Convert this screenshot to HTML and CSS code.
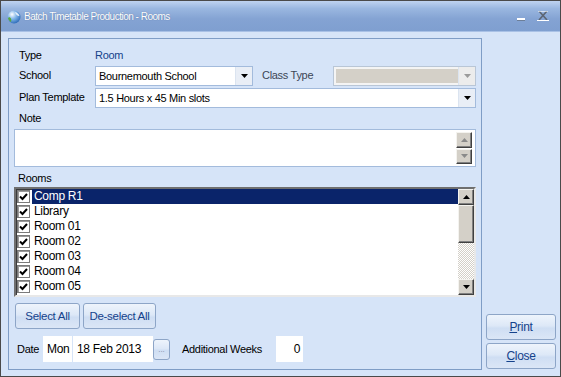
FILE: index.html
```html
<!DOCTYPE html>
<html>
<head>
    <title>Batch Timetable Production - Rooms</title>
    <link rel="stylesheet" href="styles.css">
</head>
<body>
    <div class="window">
        <div class="titlebar">
            <svg class="app-icon" width="14" height="14" viewBox="0 0 14 14">
                <defs>
                    <radialGradient id="globe" cx="0.35" cy="0.3" r="0.8">
                        <stop offset="0" stop-color="#ffffff"/>
                        <stop offset="0.45" stop-color="#7fb4e8"/>
                        <stop offset="1" stop-color="#1f5fb0"/>
                    </radialGradient>
                </defs>
                <circle cx="7" cy="7" r="6.5" fill="url(#globe)"/>
                <path d="M1 8 C3 6 5 9 4 12 C2.5 11 1.3 9.8 1 8 Z" fill="#5aa83c"/>
                <path d="M8 2 C10 2.5 12 4 12.5 6 C11 6.5 9 5 8 2 Z" fill="#ffffff" opacity="0.8"/>
            </svg>
            <span class="title">Batch Timetable Production - Rooms</span>
            <svg class="tb-min" width="8" height="4" viewBox="0 0 8 4">
                <rect x="0" y="0" width="8" height="2" fill="#ffffff"/>
                <rect x="0" y="2" width="8" height="1" fill="#6d7f99"/>
            </svg>
            <svg class="tb-close" width="12" height="10" viewBox="0 0 12 10">
                <path d="M2 0 L10 9 M10 0 L2 9" stroke="#5d6673" stroke-width="1.6"/>
                <rect x="0" y="9" width="12" height="1" fill="#ffffff"/>
                <rect x="1" y="0" width="10" height="1" fill="#ffffff" opacity="0.6"/>
            </svg>
        </div>

        <div class="client">
            <div class="panel">
                <div class="row row-type">
                    <span class="lbl">Type</span>
                    <span class="value">Room</span>
                </div>

                <div class="row row-ctl">
                    <span class="lbl">School</span>
                    <div class="combo combo-school">
                        <span class="combo-text">Bournemouth School</span>
                        <span class="combo-btn"><svg width="7" height="4" viewBox="0 0 7 4"><polygon points="0,0 7,0 3.5,4" fill="#000"/></svg></span>
                    </div>
                    <span class="lbl-class">Class Type</span>
                    <div class="combo combo-dis">
                        <span class="combo-fill"></span>
                        <span class="combo-btn"><svg width="7" height="4" viewBox="0 0 7 4"><polygon points="0,0 7,0 3.5,4" fill="#9a9a9a"/></svg></span>
                    </div>
                </div>

                <div class="row row-ctl">
                    <span class="lbl">Plan Template</span>
                    <div class="combo combo-wide">
                        <span class="combo-text">1.5 Hours x 45 Min slots</span>
                        <span class="combo-btn"><svg width="7" height="4" viewBox="0 0 7 4"><polygon points="0,0 7,0 3.5,4" fill="#000"/></svg></span>
                    </div>
                </div>

                <div class="row row-note">
                    <span class="lbl">Note</span>
                </div>

                <div class="note">
                    <div class="spin">
                        <span class="btn3d spin-btn"><svg width="7" height="4" viewBox="0 0 7 4"><polygon points="0,4 7,4 3.5,0" fill="#8a8a8a"/></svg></span>
                        <span class="btn3d spin-btn"><svg width="7" height="4" viewBox="0 0 7 4"><polygon points="0,0 7,0 3.5,4" fill="#8a8a8a"/></svg></span>
                    </div>
                </div>

                <div class="rooms-lbl">Rooms</div>

                <div class="listbox">
                    <ul class="items">
                        <li class="item selected"><span class="check"><svg width="9" height="9" viewBox="0 0 9 9"><path d="M1 4.5 L3.5 7 L8 2" fill="none" stroke="#000" stroke-width="2"/></svg></span><span class="item-text">Comp R1</span></li>
                        <li class="item"><span class="check"><svg width="9" height="9" viewBox="0 0 9 9"><path d="M1 4.5 L3.5 7 L8 2" fill="none" stroke="#000" stroke-width="2"/></svg></span><span class="item-text">Library</span></li>
                        <li class="item"><span class="check"><svg width="9" height="9" viewBox="0 0 9 9"><path d="M1 4.5 L3.5 7 L8 2" fill="none" stroke="#000" stroke-width="2"/></svg></span><span class="item-text">Room 01</span></li>
                        <li class="item"><span class="check"><svg width="9" height="9" viewBox="0 0 9 9"><path d="M1 4.5 L3.5 7 L8 2" fill="none" stroke="#000" stroke-width="2"/></svg></span><span class="item-text">Room 02</span></li>
                        <li class="item"><span class="check"><svg width="9" height="9" viewBox="0 0 9 9"><path d="M1 4.5 L3.5 7 L8 2" fill="none" stroke="#000" stroke-width="2"/></svg></span><span class="item-text">Room 03</span></li>
                        <li class="item"><span class="check"><svg width="9" height="9" viewBox="0 0 9 9"><path d="M1 4.5 L3.5 7 L8 2" fill="none" stroke="#000" stroke-width="2"/></svg></span><span class="item-text">Room 04</span></li>
                        <li class="item"><span class="check"><svg width="9" height="9" viewBox="0 0 9 9"><path d="M1 4.5 L3.5 7 L8 2" fill="none" stroke="#000" stroke-width="2"/></svg></span><span class="item-text">Room 05</span></li>
                    </ul>
                    <div class="vscroll">
                        <span class="btn3d sb-btn"><svg width="7" height="4" viewBox="0 0 7 4"><polygon points="0,4 7,4 3.5,0" fill="#000"/></svg></span>
                        <span class="btn3d sb-thumb"></span>
                        <span class="sb-track"></span>
                        <span class="btn3d sb-btn"><svg width="7" height="4" viewBox="0 0 7 4"><polygon points="0,0 7,0 3.5,4" fill="#000"/></svg></span>
                    </div>
                </div>

                <div class="btn-row">
                    <button class="btn btn-sel">Select All</button>
                    <button class="btn btn-desel">De-select All</button>
                </div>

                <div class="date-row">
                    <span class="lbl-date">Date</span>
                    <span class="box box-day">Mon</span>
                    <span class="box box-date">18 Feb 2013</span>
                    <button class="btn btn-dots">...</button>
                    <span class="lbl-weeks">Additional Weeks</span>
                    <span class="box box-weeks">0</span>
                </div>
            </div>

            <div class="side">
                <button class="btn btn-side"><u>P</u>rint</button>
                <button class="btn btn-side"><u>C</u>lose</button>
            </div>
        </div>
    </div>
</body>
</html>
```

FILE: styles.css
```css
* {
    box-sizing: border-box;
}

body {
    margin: 0;
    font-family: "Liberation Sans", Arial, sans-serif;
    font-size: 11px;
    letter-spacing: -0.3px;
    color: #000;
}

.window {
    width: 561px;
    height: 377px;
    border: 1px solid #4a4a4a;
    background-color: #d6e4f8;
    display: flex;
    flex-direction: column;
}

/* title bar */
.titlebar {
    height: 31px;
    flex: none;
    display: flex;
    align-items: center;
    padding-left: 6px;
    background: linear-gradient(to bottom, #bfd3f0 0%, #9ab7e0 25%, #84a3d3 60%, #7f9fd0 100%);
    border-bottom: 1px solid #a9c1e6;
}

.app-icon {
    margin-top: 1px;
}

.title {
    margin-left: 3px;
    color: #ffffff;
    font-size: 10px;
    letter-spacing: -0.5px;
    text-shadow: 0 0 1px #4f6d9c;
    flex: 1;
}

.tb-min {
    margin-top: 8px;
    margin-right: 12px;
}

.tb-close {
    margin-top: 0;
    margin-right: 11px;
}

/* client area */
.client {
    flex: 1;
    display: flex;
    padding: 6px 4px 6px 7px;
}

.panel {
    width: 474px;
    border: 1px solid #7f9dc6;
    padding: 5px 5px 6px 5px;
    display: flex;
    flex-direction: column;
}

.row {
    display: flex;
    align-items: center;
    height: 20px;
}

.row-ctl {
    margin-top: 2px;
}

.lbl {
    width: 81px;
    padding-left: 5px;
    flex: none;
    padding-bottom: 3px;
}

.row-type .lbl {
    padding-bottom: 0;
    padding-top: 2px;
}

.value {
    color: #15428b;
    padding-top: 2px;
}

.lbl-class {
    width: 80px;
    padding-left: 9px;
    color: #3c4656;
    padding-bottom: 3px;
}

.combo {
    height: 20px;
    display: flex;
    border: 1px solid #a3bbdc;
    background-color: #ffffff;
}

.combo-school {
    width: 158px;
}

.combo-dis {
    width: 143px;
    background-color: #f4f4f4;
    border-color: #b9c6d6;
    padding: 2px 0 2px 2px;
}

.combo-wide {
    flex: 1;
}

.combo-text {
    flex: 1;
    padding: 3px 0 0 3px;
    white-space: nowrap;
}

.combo-fill {
    flex: 1;
    background-color: #d4d0c8;
}

.combo-btn {
    width: 17px;
    display: flex;
    align-items: center;
    justify-content: center;
    background-color: #e9eef6;
    border-left: 1px solid #dbe4f0;
}

.combo-dis .combo-btn {
    margin: -2px 0;
    background-color: #ececec;
}

.row-note {
    height: 20px;
}

.row-note .lbl {
    padding-bottom: 1px;
}

.note {
    margin-top: 1px;
    height: 38px;
    border: 1px solid #a3bbdc;
    background-color: #ffffff;
    display: flex;
    justify-content: flex-end;
    padding: 2px 3px 2px 0;
}

.spin {
    display: flex;
    flex-direction: column;
    gap: 1px;
}

.btn3d {
    display: flex;
    align-items: center;
    justify-content: center;
    background-color: #d4d0c8;
    border: 1px solid;
    border-color: #f4f3ef #404040 #404040 #f4f3ef;
    box-shadow: inset -1px -1px #808080;
}

.spin-btn {
    width: 16px;
    height: 16px;
}

.rooms-lbl {
    margin-top: 2px;
    height: 18px;
    line-height: 18px;
    padding-left: 4px;
}

/* rooms list */
.listbox {
    height: 110px;
    display: flex;
    background-color: #ffffff;
    border: 2px solid;
    border-color: #6f6f6f #e8e8e8 #e8e8e8 #6f6f6f;
    box-shadow: inset 1px 1px #3a3a3a;
}

.items {
    list-style: none;
    margin: 0;
    padding: 0;
    flex: 1;
}

.item {
    height: 15px;
    display: flex;
    align-items: center;
}

.check {
    width: 13px;
    height: 13px;
    margin-left: 1px;
    margin-right: 2px;
    border: 1px solid #7a7a7a;
    box-shadow: inset 1px 1px #9a9a9a;
    background-color: #ffffff;
    display: flex;
    align-items: center;
    justify-content: center;
}

.item-text {
    flex: 1;
    height: 15px;
    line-height: 15px;
    padding-left: 2px;
    font-size: 12px;
}

.selected .item-text {
    background-color: #0a246a;
    color: #ffffff;
}

.vscroll {
    width: 16px;
    display: flex;
    flex-direction: column;
}

.sb-btn {
    height: 16px;
}

.sb-thumb {
    height: 38px;
}

.sb-track {
    flex: 1;
    background: repeating-conic-gradient(#ffffff 0 25%, #d4d0c8 0 50%) 0 0 / 2px 2px;
}

/* buttons */
.btn {
    font-family: "Liberation Sans", Arial, sans-serif;
    font-size: 11.5px;
    letter-spacing: -0.3px;
    color: #15428b;
    border: 1px solid #8da5c7;
    border-radius: 3px;
    background: linear-gradient(to bottom, #eef4fc 0%, #dde8f7 45%, #cfdef3 55%, #dbe6f6 100%);
    padding: 0;
}

.btn-row {
    margin-top: 6px;
    height: 26px;
    display: flex;
    gap: 3px;
    padding-left: 1px;
}

.btn-sel {
    width: 65px;
}

.btn-desel {
    width: 73px;
}

.date-row {
    margin-top: 7px;
    height: 26px;
    display: flex;
    align-items: center;
}

.lbl-date {
    width: 29px;
    padding-left: 3px;
}

.box {
    height: 26px;
    background-color: #ffffff;
    line-height: 26px;
    font-size: 12px;
}

.box-day {
    width: 29px;
    padding-left: 4px;
}

.box-date {
    width: 80px;
    margin-left: 1px;
    padding-left: 4px;
}

.btn-dots {
    width: 17px;
    height: 21px;
    color: #7d8ca3;
    font-size: 8px;
    letter-spacing: 0;
}

.lbl-weeks {
    width: 94px;
    margin-left: 12px;
}

.box-weeks {
    width: 27px;
    text-align: right;
    padding-right: 3px;
}

/* right column */
.side {
    margin-left: 4px;
    display: flex;
    flex-direction: column;
    justify-content: flex-end;
    gap: 3px;
    padding-bottom: 1px;
}

.btn-side {
    width: 70px;
    height: 26px;
    font-size: 12px;
}
```
